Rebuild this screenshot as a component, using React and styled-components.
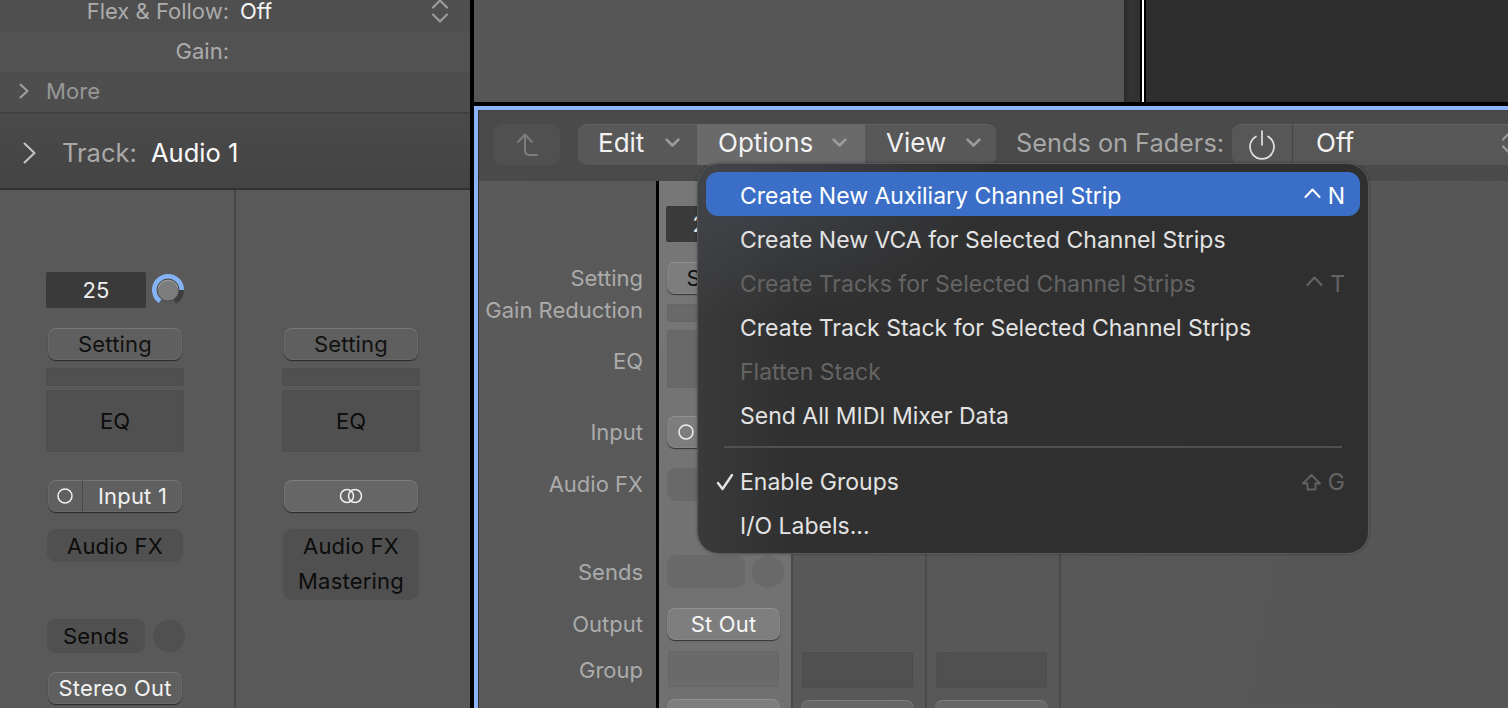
import React from 'react';
import styled, { createGlobalStyle } from 'styled-components';

const Global = createGlobalStyle`
  html, body { margin: 0; padding: 0; background: #000; }
  * { box-sizing: border-box; }
`;

const Page = styled.div`
  width: 1508px; height: 708px; overflow: hidden; display: flex;
  font-family: Inter, "Liberation Sans", sans-serif;
  font-size: 22px; background: #000;
  -webkit-font-smoothing: antialiased;
`;

/* ---------- left inspector ---------- */
const Inspector = styled.aside`
  width: 474px; flex: none; height: 708px; display: flex; flex-direction: column;
  border-right: 4px solid #000; background: #595959;
`;
const ParamRow = styled.div`
  height: ${p => p.$h}px; flex: none; background: ${p => p.$bg};
  display: flex; align-items: center; gap: 11px;
  padding-bottom: ${p => p.$pb || 0}px;
  line-height: 1;
`;
const ParamLabel = styled.span`
  width: 229px; text-align: right; color: #acacac; white-space: nowrap; flex: none;
`;
const ParamValue = styled.span`
  color: #f4f4f4; white-space: nowrap;
`;
const RowEnd = styled.span`
  margin-left: auto; margin-right: 21px; display: flex;
`;
const MoreRow = styled(ParamRow)`
  padding-left: 19px; gap: 17px; border-bottom: 2px solid #404040;
`;
const MoreLabel = styled.span`
  color: #989898; letter-spacing: 0.1px;
`;
const TrackHeader = styled.div`
  height: 76px; flex: none; display: flex; align-items: center; padding: 3px 0 0 23px;
  background: linear-gradient(#4a4a4a, #444);
  border-bottom: 2px solid #323232;
  font-size: 25.5px; line-height: 1;
`;
const TrackLabel = styled.span`
  color: #a9a9a9; margin-left: 26px; width: 89px; flex: none;
`;
const TrackName = styled.span`
  color: #fafafa;
`;
const InspectorStrips = styled.div`
  flex: 1; display: flex; min-height: 0;
`;
const InspectorStrip = styled.div`
  width: ${p => p.$w}px; flex: none; padding: 0 50px 0 46px;
  display: flex; flex-direction: column;
  border-right: ${p => (p.$divider ? '2px solid #464646' : 'none')};
`;

/* ---------- shared strip parts ---------- */
const ValueRow = styled.div`
  display: flex; align-items: center; gap: 6px; flex: none;
  margin: ${p => p.$top || 0}px 0 0 ${p => p.$left || 0}px;
`;
const ValueBox = styled.div`
  width: ${p => p.$w}px; height: 36px; flex: none; background: #3a3a3a; border-radius: 2px;
  display: flex; align-items: center; justify-content: center;
  color: #f0f0f0; line-height: 1;
`;
const Raised = styled.div`
  flex: none; height: ${p => p.$h || 32}px; margin: ${p => p.$top || 0}px ${p => p.$inset ?? 2}px 0;
  border-radius: 8px; display: flex; align-items: center; justify-content: center;
  padding-top: ${p => p.$pt ?? 0}px;
  background: ${p => p.$bg || '#5f5f5f'}; color: ${p => p.$color || '#111'};
  box-shadow: inset 0 0 0 1px rgba(255,255,255,.06), inset 0 1px 0 rgba(255,255,255,.1), 0 1px 1px rgba(0,0,0,.55);
  line-height: 1; white-space: nowrap; overflow: hidden; letter-spacing: .2px;
`;
const InputLamp = styled.span`
  width: ${p => p.$w || 35}px; height: 100%; flex: none; display: flex; align-items: center; justify-content: center;
  border-right: 1px solid #4a4a4a;
`;
const InputName = styled.span`
  flex: 1; text-align: center; color: #f0f0f0;
`;
const Well = styled.div`
  flex: none; height: ${p => p.$h}px; margin: ${p => p.$top || 0}px ${p => p.$inset || 0}px 0;
  background: ${p => p.$bg || '#505050'}; border-radius: 2px; color: #0c0c0c;
  display: flex; align-items: center; justify-content: center; line-height: 1;
  box-shadow: inset 0 0 0 1px rgba(0,0,0,.03);
`;
const Plugin = styled.div`
  flex: none; height: ${p => p.$h || 33}px; margin: ${p => p.$top || 0}px ${p => p.$inset ?? 1}px 0;
  width: ${p => (p.$w ? `${p.$w}px` : 'auto')};
  background: ${p => p.$bg || '#505050'}; border-radius: 9px; color: #0c0c0c;
  display: flex; flex-direction: column; align-items: center; justify-content: space-around;
  padding: 0 0 ${p => p.$pb || 0}px; line-height: 1; letter-spacing: .2px;
`;
const SendRow = styled.div`
  display: flex; align-items: center; gap: 7px; flex: none;
  margin-top: ${p => p.$top || 0}px;
`;
const SendDot = styled.div`
  width: 32px; height: 32px; border-radius: 50%; flex: none;
  background: ${p => p.$bg || '#505050'};
`;

/* ---------- right pane ---------- */
const Right = styled.main`
  flex: 1; min-width: 0; height: 708px; display: flex; flex-direction: column;
`;
const TopArea = styled.div`
  height: 102px; flex: none; display: flex;
`;
const TopGrey = styled.div`
  width: 650px; flex: none; background: #565656;
`;
const TopBand = styled.div`
  width: 16px; flex: none; background: linear-gradient(90deg, #2a2a2a, #343434 40%, #303030);
`;
const Cursor = styled.div`
  width: 6px; flex: none; background: #000; display: flex; justify-content: flex-start; padding-left: 2px;
  &::before { content: ''; width: 2px; background: #fff; }
`;
const TopDark = styled.div`
  flex: 1; background: #2e2e2e;
`;
const Gap = styled.div`
  height: 4px; flex: none; background: #000;
`;
const Pane = styled.section`
  flex: 1; min-height: 0; border-top: 4px solid #8ab4f5; border-left: 4px solid #8ab4f5;
  display: flex; flex-direction: column; position: relative; background: #585858;
`;
const Toolbar = styled.div`
  height: 71px; flex: none; background: #4a4a4a; border-left: 1px solid #333; border-top: 1px solid #444;
  display: flex; align-items: flex-start; padding: 13px 0 0 14px; color: #f2f2f2; line-height: 1;
  overflow: hidden;
`;
const UpButton = styled.div`
  width: 67px; height: 41px; flex: none; border-radius: 9px; background: #505050;
  display: flex; align-items: center; justify-content: center; margin-right: 18px;
`;
const MenuGroup = styled.div`
  display: flex; height: 41px; flex: none; border-radius: 9px; overflow: hidden; background: #585858; margin-right: 20px;
  box-shadow: inset 0 1px 0 rgba(255,255,255,.07);
`;
const MenuSeg = styled.div`
  width: ${p => p.$w}px; height: 100%; flex: none; display: flex; align-items: center;
  padding: 0 0 4px ${p => p.$pad}px;
  background: ${p => (p.$active ? '#6a6a6a' : 'transparent')};
  font-size: 26px;
`;
const SegText = styled.span`
  width: ${p => p.$w}px; flex: none; white-space: nowrap;
`;
const ToolLabel = styled.span`
  color: #a7a7a7; font-size: 25.3px; width: 216px; flex: none; height: 41px; padding-bottom: 4px; display: flex; align-items: center; white-space: nowrap;
`;
const PowerGroup = styled.div`
  display: flex; height: 41px; width: 300px; flex: none; border-radius: 9px 0 0 9px; background: #575757;
  box-shadow: inset 0 1px 0 rgba(255,255,255,.07);
`;
const PowerCell = styled.div`
  width: 61px; flex: none; display: flex; align-items: center; justify-content: center; border-right: 1px solid #454545;
`;
const OffCell = styled.div`
  flex: 1; display: flex; align-items: center; padding: 0 0 4px 23px; font-size: 26px;
`;
const OffStepper = styled.span`
  margin-left: auto; margin-right: 13px; display: flex;
`;

const Mixer = styled.div`
  flex: 1; min-height: 0; display: flex; border-left: 1px solid #333;
  background: linear-gradient(100deg, #5a5a5a, #565656);
`;
const LabelColumn = styled.div`
  width: 180px; flex: none; border-right: 3px solid #000; padding-right: 13px;
  display: flex; flex-direction: column; align-items: flex-end;
`;
const RowLabel = styled.div`
  height: 32px; flex: none; margin-top: ${p => p.$top || 0}px; line-height: 32px;
  color: #ababab; white-space: nowrap;
`;
const Strip = styled.div`
  width: 134px; flex: none; border-right: 2px solid #4a4a4a; padding: 0 11px 0 8px;
  display: flex; flex-direction: column;
  background: ${p => (p.$selected ? 'linear-gradient(#777, #707070)' : 'transparent')};
`;

/* ---------- options menu ---------- */
const Menu = styled.div`
  position: absolute; left: 219px; top: 53px; width: 672px; height: 391px;
  border-radius: 22px; border: 1px solid #595959; padding: 8px;
  background:
    radial-gradient(240px 130px at 8% 6%, rgba(74,80,92,.55), rgba(60,60,60,0) 100%),
    linear-gradient(90deg, #3a3a3a, #303030 14%, #2f2f2f);
  box-shadow: 0 0 3px rgba(0,0,0,.35);
  display: flex; flex-direction: column;
`;
const Item = styled.div`
  height: 44px; flex: none; border-radius: 12px; display: flex; align-items: center;
  padding: 4px 15px 0 10px; line-height: 1;
  background: ${p => (p.$active ? '#3b6fc7' : 'transparent')};
  color: ${p => (p.$active ? '#fff' : p.$disabled ? '#646464' : '#e3e3e3')};
  font-size: 23px;
`;
const CheckSlot = styled.span`
  width: 24px; flex: none; display: flex;
`;
const ItemText = styled.span`
  white-space: nowrap;
`;
const Shortcut = styled.span`
  margin-left: auto; display: flex; align-items: center; gap: 7px;
  color: ${p => p.$color || 'inherit'};
`;
const CaretMark = styled.span`
  display: flex; margin-bottom: 6px;
`;
const Separator = styled.div`
  height: 22px; flex: none; padding: 10px 18px 0;
  &::before { content: ''; display: block; height: 2px; background: #505050; }
`;

/* ---------- icons ---------- */
const Chevron = ({ size = 15, color = '#9c9c9c', width = 2.4 }) => (
  <svg width={size} height={size * 0.6} viewBox="0 0 14 8.4" fill="none" stroke={color} strokeWidth={width} strokeLinecap="round" strokeLinejoin="round">
    <path d="M1.5 1.5 7 7l5.5-5.5" />
  </svg>
);
const RightChevron = ({ w, h, color, sw }) => (
  <svg width={w} height={h} viewBox={`0 0 ${w} ${h}`} fill="none" stroke={color} strokeWidth={sw} strokeLinecap="round" strokeLinejoin="round">
    <path d={`M1.5 1.5 ${w - 1.5} ${h / 2} 1.5 ${h - 1.5}`} />
  </svg>
);
const Stepper = () => (
  <svg width="18" height="24" viewBox="0 0 18 24" fill="none" stroke="#9a9a9a" strokeWidth="2.2" strokeLinecap="round" strokeLinejoin="round">
    <path d="M2 8.5 9 1.5l7 7M2 15.5l7 7 7-7" />
  </svg>
);
const UpTurn = () => (
  <svg width="24" height="26" viewBox="0 0 24 26" fill="none" stroke="#7c7c7c" strokeWidth="2" strokeLinecap="round" strokeLinejoin="round">
    <path d="M3 10 10 2.5l7 7.5M10 3v15c0 3 2 5 5 5h7" />
  </svg>
);
const PowerIcon = () => (
  <svg width="28" height="30" viewBox="0 0 28 30" fill="none" stroke="#e2e2e2" strokeWidth="1.7" strokeLinecap="round">
    <path d="M14 1v14M8 6.5a12 12 0 1 0 12 0" />
  </svg>
);
const Knob = () => (
  <svg width="32" height="32" viewBox="0 0 32 32" fill="none">
    <path d="M29.5 16A13.5 13.5 0 0 1 22.75 27.7" stroke="#3e3e3e" strokeWidth="5" />
    <path d="M8.25 27.06A13.5 13.5 0 1 1 29.5 16" stroke="#83b2f6" strokeWidth="5" />
    <circle cx="16" cy="16" r="11" fill="#7c7c7c" stroke="#4c4c4c" strokeWidth="1" />
    <path d="M6.5 13.5A10 10 0 0 1 25.5 13.5" stroke="#a0a0a0" strokeWidth="1" />
  </svg>
);
const Lamp = () => (
  <svg width="18" height="18" viewBox="0 0 18 18" fill="none" stroke="#f0f0f0" strokeWidth="1.5">
    <circle cx="9" cy="9" r="7" />
  </svg>
);
const Rings = () => (
  <svg width="26" height="18" viewBox="0 0 26 18" fill="none" stroke="#f0f0f0" strokeWidth="1.5">
    <circle cx="9" cy="9" r="6.5" />
    <circle cx="17" cy="9" r="6.5" />
  </svg>
);
const Caret = ({ color }) => (
  <CaretMark>
    <svg width="17" height="10" viewBox="0 0 17 10" fill="none" stroke={color} strokeWidth="2" strokeLinecap="round" strokeLinejoin="round">
      <path d="M1.5 9 8.5 1.5 15.5 9" />
    </svg>
  </CaretMark>
);
const ShiftIcon = ({ color }) => (
  <svg width="19" height="17" viewBox="0 0 19 17" fill="none" stroke={color} strokeWidth="1.8" strokeLinejoin="round">
    <path d="M9.5 1 18 9.5h-4.5v6h-8v-6H1z" />
  </svg>
);
const Check = () => (
  <svg width="18" height="18" viewBox="0 0 18 18" fill="none" stroke="#e3e3e3" strokeWidth="2.4" strokeLinecap="round" strokeLinejoin="round">
    <path d="M2 10 6.5 16 16 2" />
  </svg>
);

const InspectorColumnA = () => (
  <InspectorStrip $w={236} $divider>
    <ValueRow $top={82}>
      <ValueBox $w={100}>25</ValueBox>
      <Knob />
    </ValueRow>
    <Raised $top={20}>Setting</Raised>
    <Well $top={8} $h={18} />
    <Well $top={4} $h={62}>EQ</Well>
    <Raised $top={28} $color="#f0f0f0">
      <InputLamp><Lamp /></InputLamp>
      <InputName>Input 1</InputName>
    </Raised>
    <Plugin $top={17}>Audio FX</Plugin>
    <SendRow $top={57}>
      <Plugin $inset={1} $w={98} $h={34}>Sends</Plugin>
      <SendDot />
    </SendRow>
    <Raised $top={19} $color="#f2f2f2">Stereo Out</Raised>
  </InspectorStrip>
);

const InspectorColumnB = () => (
  <InspectorStrip $w={234}>
    <Raised $top={138}>Setting</Raised>
    <Well $top={8} $h={18} />
    <Well $top={4} $h={62}>EQ</Well>
    <Raised $top={28} $bg="#666"><Rings /></Raised>
    <Plugin $top={17} $h={71} $pb={2}>
      <span>Audio FX</span>
      <span>Mastering</span>
    </Plugin>
  </InspectorStrip>
);

const SelectedStrip = () => (
  <Strip $selected>
    <ValueRow $top={25} $left={-1}>
      <ValueBox $w={80}>25</ValueBox>
    </ValueRow>
    <Raised $top={20} $inset={0} $bg="#7d7d7d">Setting</Raised>
    <Well $top={10} $h={18} $bg="#696969" />
    <Well $top={8} $h={58} $bg="#696969" />
    <Raised $top={28} $inset={0} $bg="#7d7d7d" $color="#f0f0f0">
      <InputLamp $w={38}><Lamp /></InputLamp>
      <InputName />
    </Raised>
    <Plugin $top={20} $inset={0} $bg="#696969" />
    <SendRow $top={54}>
      <Plugin $inset={0} $w={78} $bg="#696969" />
      <SendDot $bg="#696969" />
    </SendRow>
    <Raised $top={20} $inset={0} $bg="#7e7e7e" $color="#f6f6f6">St Out</Raised>
    <Well $top={11} $h={36} $inset={1} $bg="#6a6a6a" />
    <Raised $top={12} $inset={0} $pt={3} $bg="#7e7e7e">Read</Raised>
  </Strip>
);

const PlainStrip = () => (
  <Strip>
    <Well $top={471} $h={36} $inset={1} $bg="#505050" />
    <Raised $top={12} $inset={0} $pt={3} $bg="#666">Read</Raised>
  </Strip>
);

export default function App() {
  return (
    <Page>
      <Global />
      <Inspector>
        <ParamRow $h={32} $pb={10} $bg="#4f4f4f">
          <ParamLabel>Flex &amp; Follow:</ParamLabel>
          <ParamValue>Off</ParamValue>
          <RowEnd><Stepper /></RowEnd>
        </ParamRow>
        <ParamRow $h={40} $pb={3} $bg="#525252">
          <ParamLabel>Gain:</ParamLabel>
        </ParamRow>
        <MoreRow $h={42} $pb={3} $bg="#4e4e4e">
          <RightChevron w={10} h={16} color="#a0a0a0" sw={2} />
          <MoreLabel>More</MoreLabel>
        </MoreRow>
        <TrackHeader>
          <RightChevron w={13} h={22} color="#c4c4c4" sw={2} />
          <TrackLabel>Track:</TrackLabel>
          <TrackName>Audio 1</TrackName>
        </TrackHeader>
        <InspectorStrips>
          <InspectorColumnA />
          <InspectorColumnB />
        </InspectorStrips>
      </Inspector>
      <Right>
        <TopArea>
          <TopGrey />
          <TopBand />
          <Cursor />
          <TopDark />
        </TopArea>
        <Gap />
        <Pane>
          <Toolbar>
            <UpButton><UpTurn /></UpButton>
            <MenuGroup>
              <MenuSeg $w={119} $pad={20}><SegText $w={67}>Edit</SegText><Chevron /></MenuSeg>
              <MenuSeg $w={168} $pad={21} $active><SegText $w={114}>Options</SegText><Chevron /></MenuSeg>
              <MenuSeg $w={131} $pad={21}><SegText $w={80}>View</SegText><Chevron /></MenuSeg>
            </MenuGroup>
            <ToolLabel>Sends on Faders:</ToolLabel>
            <PowerGroup>
              <PowerCell><PowerIcon /></PowerCell>
              <OffCell>Off<OffStepper><Stepper /></OffStepper></OffCell>
            </PowerGroup>
          </Toolbar>
          <Mixer>
            <LabelColumn>
              <RowLabel $top={81}>Setting</RowLabel>
              <RowLabel>Gain Reduction</RowLabel>
              <RowLabel $top={19}>EQ</RowLabel>
              <RowLabel $top={39}>Input</RowLabel>
              <RowLabel $top={20}>Audio FX</RowLabel>
              <RowLabel $top={56}>Sends</RowLabel>
              <RowLabel $top={20}>Output</RowLabel>
              <RowLabel $top={14}>Group</RowLabel>
              <RowLabel $top={16}>Automation</RowLabel>
            </LabelColumn>
            <SelectedStrip />
            <PlainStrip />
            <PlainStrip />
          </Mixer>
          <Menu>
            <Item $active><CheckSlot /><ItemText>Create New Auxiliary Channel Strip</ItemText><Shortcut><Caret color="#fff" />N</Shortcut></Item>
            <Item><CheckSlot /><ItemText>Create New VCA for Selected Channel Strips</ItemText></Item>
            <Item $disabled><CheckSlot /><ItemText>Create Tracks for Selected Channel Strips</ItemText><Shortcut><Caret color="#646464" />T</Shortcut></Item>
            <Item><CheckSlot /><ItemText>Create Track Stack for Selected Channel Strips</ItemText></Item>
            <Item $disabled><CheckSlot /><ItemText>Flatten Stack</ItemText></Item>
            <Item><CheckSlot /><ItemText>Send All MIDI Mixer Data</ItemText></Item>
            <Separator />
            <Item><CheckSlot><Check /></CheckSlot><ItemText>Enable Groups</ItemText><Shortcut $color="#646464"><ShiftIcon color="#646464" />G</Shortcut></Item>
            <Item><CheckSlot /><ItemText>I/O Labels...</ItemText></Item>
          </Menu>
        </Pane>
      </Right>
    </Page>
  );
}
